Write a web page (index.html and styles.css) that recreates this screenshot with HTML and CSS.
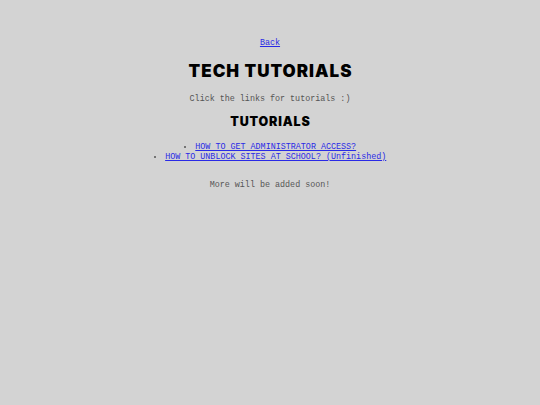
FILE: index.html
```html
<!DOCTYPE html>
<html>
<head>
<meta charset="utf-8">
<link rel="stylesheet" href="styles.css">
</head>
<body>
<div class="page">
  <a class="link back" href="#">Back</a>
  <h1 class="title">TECH TUTORIALS</h1>
  <p class="text">Click the links for tutorials :)</p>
  <h2 class="subtitle">TUTORIALS</h2>
  <ul class="list">
    <li><a class="link" href="#">HOW TO GET ADMINISTRATOR ACCESS?</a></li>
    <li><a class="link" href="#">HOW TO UNBLOCK SITES AT SCHOOL? (Unfinished)</a></li>
  </ul>
  <p class="text">More will be added soon!</p>
</div>
</body>
</html>
```
FILE: styles.css
```css
html, body {
  margin: 0;
  padding: 0;
  background: #d3d3d3;
}
.page {
  display: flex;
  flex-direction: column;
  align-items: center;
  text-align: center;
  padding-top: 38px;
  font-family: "Liberation Mono", "Courier New", monospace;
  font-size: 8.4px;
  color: #555;
}
.link {
  color: #2a2ae6;
}
.back {
  line-height: 10px;
}
.title {
  font-family: Inter, "Liberation Sans", Arial, sans-serif;
  font-weight: 900;
  font-size: 17px;
  letter-spacing: 1px;
  padding-left: 1px;
  color: #000;
  margin: 13px 0 0;
  line-height: 20px;
}
.text {
  margin: 13px 0 0;
  line-height: 10px;
}
.subtitle {
  font-family: Inter, "Liberation Sans", Arial, sans-serif;
  font-weight: 900;
  font-size: 12.5px;
  letter-spacing: 0.85px;
  padding-left: 0.85px;
  color: #000;
  margin: 10px 0 0;
  line-height: 16px;
}
.list {
  list-style-position: inside;
  margin: 12px 0 0;
  padding: 0;
  line-height: 10px;
}
.list + .text {
  margin-top: 18px;
}
```
